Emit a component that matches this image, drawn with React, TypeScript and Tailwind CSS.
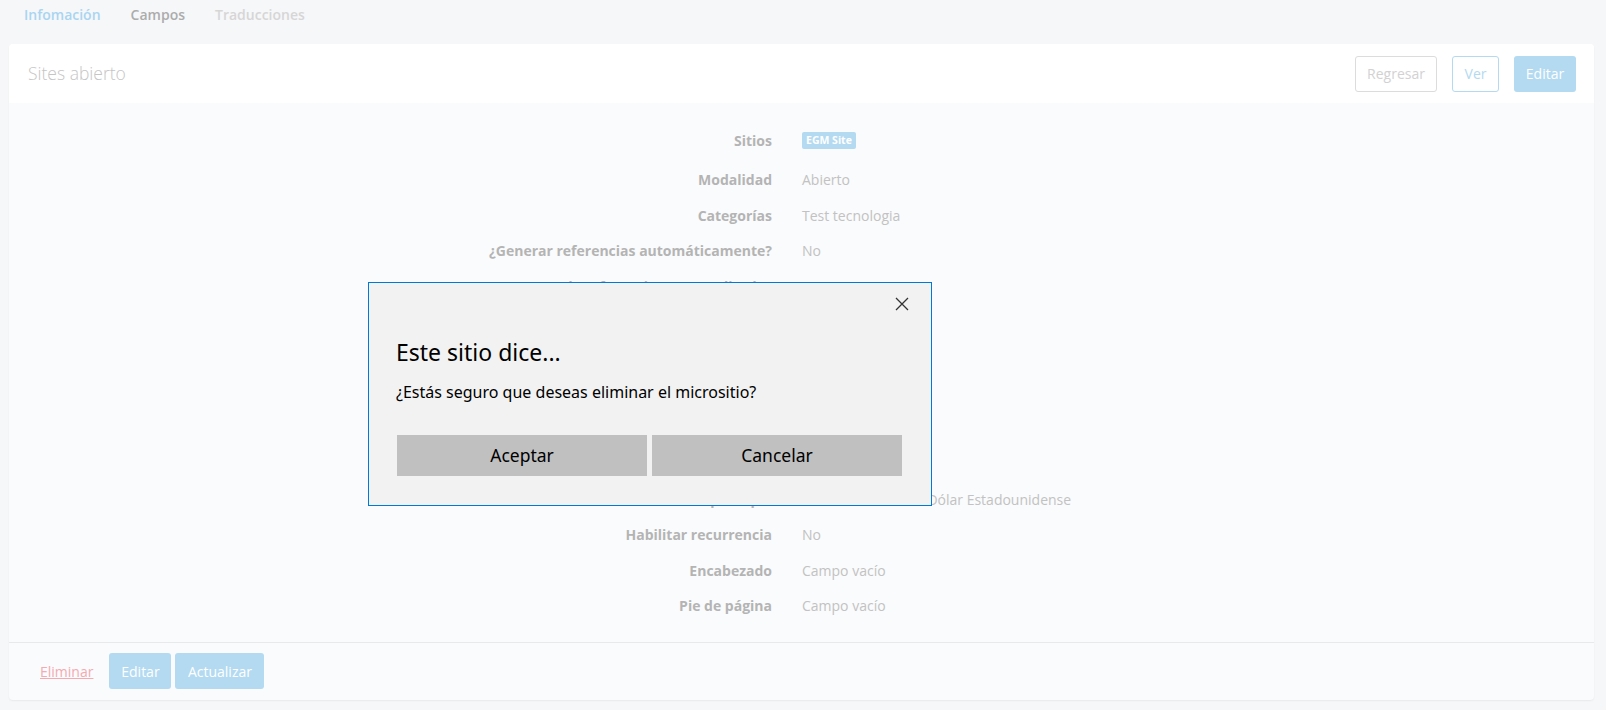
import React from 'react';

const rows: { label: string; value: React.ReactNode }[] = [
  { label: 'Modalidad', value: 'Abierto' },
  { label: 'Categorías', value: 'Test tecnologia' },
  { label: '¿Generar referencias automáticamente?', value: 'No' },
  { label: 'Formato de referencias personalizado?', value: 'No' },
  { label: 'Dirección', value: 'Campo vacío' },
  { label: 'Teléfono', value: 'Campo vacío' },
  { label: 'Correo', value: 'Campo vacío' },
  { label: 'Idioma', value: 'Español' },
  { label: 'País', value: 'Estados Unidos' },
  { label: 'Moneda principal', value: 'Estados Unidos —\u00A0 Dólar Estadounidense' },
  { label: 'Habilitar recurrencia', value: 'No' },
  { label: 'Encabezado', value: 'Campo vacío' },
  { label: 'Pie de página', value: 'Campo vacío' },
];

export default function App() {
  return (
    <div className="relative min-h-screen bg-[#f6f7f9] font-['Open_Sans',sans-serif] pl-[9px] pr-[12px] pb-[10px]">
      {/* TABS */}
      <div className="h-[44px] flex items-start pt-[4px] pl-[15px] gap-[30px] text-[14px] font-semibold">
        <span className="text-[#a9d5f1]">Infomación</span>
        <span className="text-[#acacac]">Campos</span>
        <span className="text-[#d6d6d6]">Traducciones</span>
      </div>

      {/* CARD */}
      <div className="bg-[#fafbfc] rounded-[4px] shadow-[0_1px_2px_rgba(0,0,0,0.06)] overflow-hidden">
        <div className="bg-white h-[59px] flex items-center justify-between pl-[19px] pr-[18px]">
          <h1 className="text-[17.5px] font-light text-[#c5c5c5]">Sites abierto</h1>
          <div className="flex items-center gap-[15px] text-[14px]">
            <button className="h-[36px] w-[82px] border border-[#dcdcdc] rounded-[3px] text-[#d2d2d2]">Regresar</button>
            <button className="h-[36px] w-[47px] border border-[#b3daf1] rounded-[3px] text-[#b3daf1]">Ver</button>
            <button className="h-[36px] w-[62px] bg-[#b3daf1] rounded-[3px] text-white">Editar</button>
          </div>
        </div>

        <div className="pt-[19px] pb-[18px] text-[14px]">
          <div className="flex items-center h-[36px] mb-[4px]">
            <div className="w-[764px] text-right font-bold text-[#b4b4b4] pr-[1px]">Sitios</div>
            <div className="pl-[29px] self-start pt-[6px]">
              <span className="inline-block bg-[#b3daf1] text-white text-[10.5px] font-bold leading-[17px] px-[4px] rounded-[2px]">EGM Site</span>
            </div>
          </div>
          {rows.map((r) => (
            <div key={r.label} className="flex items-center h-[35.5px]">
              <div className="w-[764px] text-right font-bold text-[#b4b4b4] pr-[1px]">{r.label}</div>
              <div className="pl-[29px] text-[#c2c2c2]">{r.value}</div>
            </div>
          ))}
        </div>

        <div className="border-t border-[#e8e9eb] h-[58px] flex items-center pl-[31px] gap-[4px] text-[14px]">
          <a className="text-[#f4aab1] underline mr-[12px]">Eliminar</a>
          <button className="h-[36px] w-[62px] bg-[#b3daf1] rounded-[3px] text-white">Editar</button>
          <button className="h-[36px] w-[89px] bg-[#b3daf1] rounded-[3px] text-white">Actualizar</button>
        </div>
      </div>

      {/* ALERT DIALOG */}
      <div className="absolute left-[368px] top-[282px] w-[564px] h-[224px] bg-[#f2f2f2] border border-[#0078d7] font-['Noto_Sans',sans-serif] text-black">
        <button className="absolute right-[20px] top-[12px] w-[18px] h-[18px] flex items-center justify-center">
          <svg width="14" height="14" viewBox="0 0 14 14" stroke="#333" strokeWidth="1.3">
            <path d="M1 1 L13 13 M13 1 L1 13" />
          </svg>
        </button>
        <div className="pt-[54px] pl-[27px] pr-[29px]">
          <div className="text-[23px] leading-[30px]">Este sitio dice...</div>
          <div className="mt-[14px] text-[16px] leading-[22px]">¿Estás seguro que deseas eliminar el micrositio?</div>
          <div className="mt-[32px] flex gap-[5px] pl-[1px]">
            <button className="flex-1 h-[41px] bg-[#c0c0c0] text-[17.5px]">Aceptar</button>
            <button className="flex-1 h-[41px] bg-[#c0c0c0] text-[17.5px]">Cancelar</button>
          </div>
        </div>
      </div>
    </div>
  );
}
